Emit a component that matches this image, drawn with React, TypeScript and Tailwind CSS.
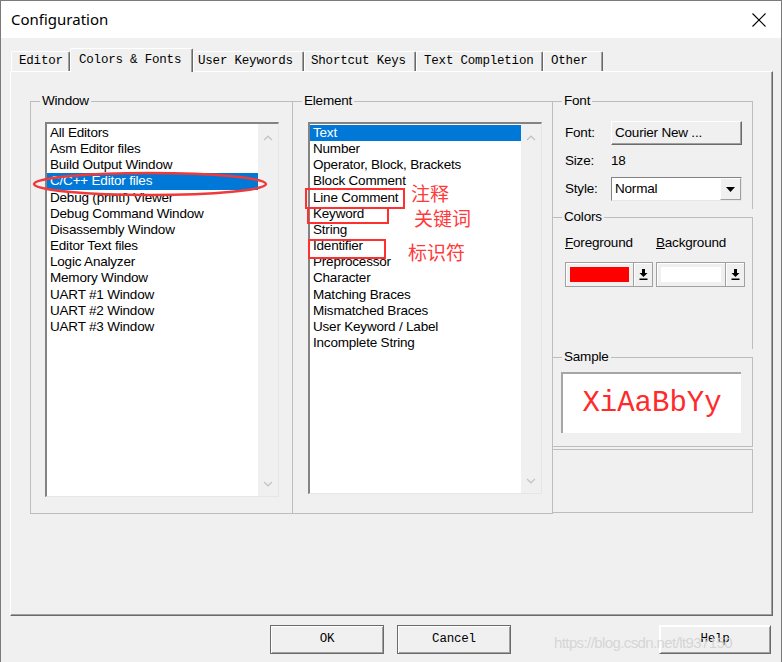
import React from "react";

const ui = "font-['Liberation_Sans',Arial,sans-serif] text-[13.5px] tracking-[-0.2px] text-black";
const mono = "font-['Liberation_Mono','Courier_New',monospace] text-[12.5px] text-black";

const windows = [
  "All Editors",
  "Asm Editor files",
  "Build Output Window",
  "C/C++ Editor files",
  "Debug (printf) Viewer",
  "Debug Command Window",
  "Disassembly Window",
  "Editor Text files",
  "Logic Analyzer",
  "Memory Window",
  "UART #1 Window",
  "UART #2 Window",
  "UART #3 Window",
];

const elements = [
  "Text",
  "Number",
  "Operator, Block, Brackets",
  "Block Comment",
  "Line Comment",
  "Keyword",
  "String",
  "Identifier",
  "Preprocessor",
  "Character",
  "Matching Braces",
  "Mismatched Braces",
  "User Keyword / Label",
  "Incomplete String",
];

const tabs = [
  { label: "Editor", w: "w-[59px]", pl: "pl-[7px]" },
  { label: "Colors & Fonts", w: "w-[123px]", pl: "pl-[8px]", active: true },
  { label: "User Keywords", w: "w-[111px]", pl: "pl-[4px]" },
  { label: "Shortcut Keys", w: "w-[112px]", pl: "pl-[6px]" },
  { label: "Text Completion", w: "w-[127px]", pl: "pl-[7px]" },
  { label: "Other", w: "w-[60px]", pl: "pl-[7px]" },
];

const legend = "ml-[9px] px-[2px] leading-[16px]";

const Chevron = ({ up }: { up?: boolean }) => (
  <svg width="10" height="6" viewBox="0 0 10 6">
    <path
      d={up ? "M1 5L5 1.2L9 5" : "M1 1L5 4.8L9 1"}
      fill="none"
      stroke="#c4c4c4"
      strokeWidth="1.3"
    />
  </svg>
);

const ListBox = ({ items, selected, h }: { items: string[]; selected: number; h: string }) => (
  <div
    className={`flex w-[234px] ${h} bg-white border-t-2 border-l-2 border-r border-b border-t-[#838383] border-l-[#838383] border-r-[#e6e6e6] border-b-[#e6e6e6]`}
  >
    <div className="flex-1 pt-[1px]">
      {items.map((it, i) => (
        <div
          key={it}
          className={`h-[16.17px] flex items-center pl-[3px] whitespace-nowrap ${
            i === selected ? "bg-[#0078d7] text-white" : ""
          }`}
        >
          {it}
        </div>
      ))}
    </div>
    <div className="w-[20px] bg-[#f0f0f0] flex flex-col items-center justify-between pt-[11px] pb-[9px]">
      <Chevron up />
      <Chevron />
    </div>
  </div>
);

const DropArrow = () => (
  <svg width="9" height="11" viewBox="0 0 9 11">
    <path d="M3 0h3v4h2.5L4.5 8 0.5 4H3z" fill="#000" />
    <rect x="0.5" y="9.5" width="8" height="1.5" fill="#000" />
  </svg>
);

const ColorCombo = ({ color, w }: { color: string; w: string }) => (
  <div className={`flex ${w} h-[25px] border border-[#a0a0a0] bg-[#f0f0f0] shadow-[inset_1px_1px_0_#fff]`}>
    <div className="flex-1 p-[4px]">
      <div className={`h-full ${color}`} />
    </div>
    <div className="w-[19px] flex items-center justify-center border-l border-l-[#a0a0a0] shadow-[inset_1px_1px_0_#fff]">
      <DropArrow />
    </div>
  </div>
);

const Button = ({ label, w, dark }: { label: string; w: string; dark?: boolean }) => (
  <div
    className={`${w} h-[29px] flex items-center justify-center bg-[#f0f0f0] border ${
      dark ? "border-[#6a6a6a]" : "border-t-white border-l-white border-r-[#6a6a6a] border-b-[#6a6a6a]"
    } shadow-[inset_1px_1px_0_#fff,inset_-1px_-1px_0_#a0a0a0] ${mono}`}
  >
    {label}
  </div>
);

export default function App() {
  return (
    <div className={`relative w-[782px] h-[662px] overflow-hidden bg-[#f0f0f0] border-x border-t border-[#7a7a7a] ${ui}`}>
      {/* title bar */}
      <div className="h-[37px] bg-white flex items-center justify-between pl-[10px] pr-[15px]">
        <span className="font-['Noto_Sans',sans-serif] text-[15px] tracking-normal">Configuration</span>
        <svg width="14" height="14" viewBox="0 0 14 14">
          <path d="M0.5 0.5L13.5 13.5M13.5 0.5L0.5 13.5" stroke="#000" strokeWidth="1.1" />
        </svg>
      </div>

      {/* tabs */}
      <div className="h-[33px] flex items-end pl-[10px]">
        {tabs.map((t) => (
          <div
            key={t.label}
            className={`${t.w} ${t.pl} flex items-center whitespace-nowrap rounded-t-[2px] border-t border-l border-r border-t-white border-l-white border-r-[#696969] shadow-[inset_-1px_0_0_#a0a0a0] bg-[#f0f0f0] ${mono} ${
              t.active ? "h-[24px] -mb-px relative z-10" : "h-[20px]"
            }`}
          >
            {t.label}
          </div>
        ))}
      </div>

      {/* panel */}
      <div className="ml-[9px] w-[763px] h-[545px] border-t border-l border-r border-b border-t-white border-l-white border-r-[#696969] border-b-[#696969] shadow-[inset_-1px_-1px_0_#a0a0a0] pl-[19px] pt-[21px]">
        <div className="flex">
          <fieldset className="w-[263px] h-[421px] border border-[#bdbdbd]">
            <legend className={legend}>Window</legend>
            <div className="mt-[13px] pl-[14px]">
              <ListBox items={windows} selected={3} h="h-[375px]" />
            </div>
          </fieldset>

          <fieldset className="w-[260px] h-[421px] border border-l-0 border-[#bdbdbd]">
            <legend className={legend}>Element</legend>
            <div className="mt-[13px] pl-[15px]">
              <ListBox items={elements} selected={0} h="h-[372px]" />
            </div>
          </fieldset>

          <div className="w-[200px] flex flex-col">
            <fieldset className="h-[116px] border-t border-r border-[#bdbdbd]">
              <legend className={legend}>Font</legend>
              <div className="pl-[12px]">
                <div className="mt-[12px] flex items-center h-[24px]">
                  <span className="w-[46px]">Font:</span>
                  <div className="w-[131px] h-[24px] flex items-center pl-[3px] border border-t-white border-l-white border-r-[#6a6a6a] border-b-[#6a6a6a] shadow-[inset_-1px_-1px_0_#a0a0a0]">
                    Courier New ...
                  </div>
                </div>
                <div className="mt-[8px] flex items-center h-[16px]">
                  <span className="w-[46px]">Size:</span>
                  <span>18</span>
                </div>
                <div className="mt-[8px] flex items-center h-[24px]">
                  <span className="w-[46px]">Style:</span>
                  <div className="w-[131px] h-[24px] flex bg-white border border-t-[#838383] border-l-[#838383] border-r-[#e6e6e6] border-b-[#e6e6e6]">
                    <span className="flex-1 flex items-center pl-[3px]">Normal</span>
                    <div className="w-[21px] flex items-center justify-center bg-[#f0f0f0] border border-t-white border-l-white border-r-[#a0a0a0] border-b-[#a0a0a0]">
                      <svg width="9" height="5" viewBox="0 0 9 5">
                        <path d="M0 0h9L4.5 5z" fill="#000" />
                      </svg>
                    </div>
                  </div>
                </div>
              </div>
            </fieldset>

            <fieldset className="h-[140px] border-t border-r border-[#bdbdbd]">
              <legend className={legend}>Colors</legend>
              <div className="pl-[12px]">
                <div className="mt-[10px] flex h-[16px] items-center">
                  <span className="w-[91px]">
                    <span className="underline">F</span>oreground
                  </span>
                  <span>
                    <span className="underline">B</span>ackground
                  </span>
                </div>
                <div className="mt-[11px] flex gap-[3px]">
                  <ColorCombo color="bg-[#ff0000]" w="w-[88px]" />
                  <ColorCombo color="bg-white" w="w-[89px]" />
                </div>
              </div>
            </fieldset>

            <fieldset className="h-[98px] border-t border-r border-b border-[#bdbdbd]">
              <legend className={legend}>Sample</legend>
              <div className="pl-[8px]">
                <div className="mt-[7px] w-[180px] h-[61px] bg-white border-t-2 border-l-2 border-[#a6a6a6] flex items-center justify-center font-['Liberation_Mono','Courier_New',monospace] text-[29px] tracking-normal text-[#ff2a2a]">
                  XiAaBbYy
                </div>
              </div>
            </fieldset>

            <div className="mt-[2px] h-[64px] border-t border-r border-b border-[#bdbdbd]" />
          </div>
        </div>
      </div>

      {/* buttons */}
      <div className="mt-[9px] flex">
        <div className="ml-[269px]">
          <Button label="OK" w="w-[114px]" dark />
        </div>
        <div className="ml-[13px]">
          <Button label="Cancel" w="w-[114px]" dark />
        </div>
        <div className="ml-[148px]">
          <Button label="Help" w="w-[112px]" />
        </div>
      </div>

      {/* annotations */}
      <svg className="absolute left-[31px] top-[170px]" width="236" height="26" viewBox="0 0 236 26">
        <ellipse cx="118" cy="13" rx="116" ry="11" fill="none" stroke="#f03a3a" strokeWidth="2.5" />
      </svg>
      <div className="absolute left-[304px] top-[187px] w-[100px] h-[21px] border-2 border-[#ff3030]" />
      <div className="absolute left-[306px] top-[206px] w-[82px] h-[17px] border-2 border-[#ff3030]" />
      <div className="absolute left-[307px] top-[238px] w-[78px] h-[20px] border-2 border-[#ff3030]" />
      <div className="absolute left-[410px] top-[182px] leading-[19px] text-[19px] tracking-normal text-[#ff3a3a] font-['Noto_Sans_CJK_SC',sans-serif]">
        注释
      </div>
      <div className="absolute left-[413px] top-[207px] leading-[19px] text-[19px] tracking-normal text-[#ff3a3a] font-['Noto_Sans_CJK_SC',sans-serif]">
        关键词
      </div>
      <div className="absolute left-[407px] top-[241px] leading-[19px] text-[19px] tracking-normal text-[#ff3a3a] font-['Noto_Sans_CJK_SC',sans-serif]">
        标识符
      </div>

      {/* watermark */}
      <div className="absolute left-[553px] top-[631px] text-[15px] tracking-[-0.6px] text-[#d2d2d2]/90">
        https://blog.csdn.net/lt937150
      </div>
    </div>
  );
}
